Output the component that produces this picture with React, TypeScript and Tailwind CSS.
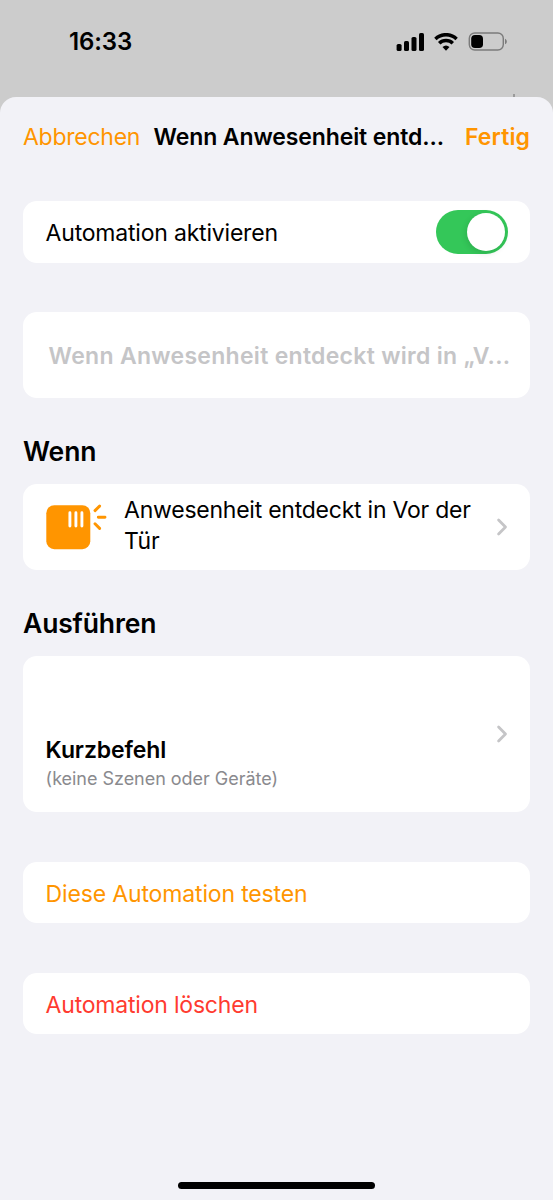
import { useState } from "react";
import type { ReactNode } from "react";

function StatusBar() {
  return (
    <header className="relative h-[97px] flex justify-between items-start pl-[69px] pr-[45px] pt-[27px]">
      <span className="text-[24px] leading-[30px] font-semibold tracking-[-0.1px]">16:33</span>
      <div className="flex items-center pt-[5px]">
        {/* Signal */}
        <svg width="28" height="18" viewBox="0 0 28 18" className="mr-[10px]">
          <rect x="0.6" y="11" width="5" height="7" rx="1.6" />
          <rect x="8" y="8" width="5" height="10" rx="1.6" />
          <rect x="15.5" y="4" width="5" height="14" rx="1.6" />
          <rect x="23" y="0" width="5" height="18" rx="1.6" />
        </svg>
        {/* Wifi */}
        <svg width="24" height="18" viewBox="0 0 24 18" fill="none" stroke="black" className="mr-[10px]">
          <path d="M1.4 5.9a15.4 15.4 0 0 1 21.2 0" strokeWidth="3.5" />
          <path d="M5.2 10.3a9.8 9.8 0 0 1 13.6 0" strokeWidth="3.5" />
          <path d="M8.5 14.1a5.2 5.2 0 0 1 7 0L12 17.7z" fill="black" stroke="none" />
        </svg>
        {/* Battery */}
        <svg width="40" height="19" viewBox="0 0 40 19">
          <rect x="1.3" y="1" width="34" height="17" rx="5.5" fill="none" stroke="#7b7b7b" strokeWidth="1.4" />
          <rect x="3.2" y="3" width="11.8" height="13" rx="3.8" />
          <path d="M37 6.7c2.4 1 2.4 4.6 0 5.6z" fill="#7b7b7b" />
        </svg>
      </div>
      <span className="absolute right-[38px] bottom-0 w-[2px] h-[3px] bg-[#9a9a9a]" />
    </header>
  );
}

function Chevron() {
  return (
    <svg width="12" height="18" viewBox="0 0 12 18" fill="none" stroke="#c5c5c7" strokeWidth="2.8" className="shrink-0">
      <path d="M2.6 2.1l6.9 6.9-6.9 6.9" strokeLinecap="round" strokeLinejoin="round" />
    </svg>
  );
}

function MotionSensorIcon() {
  return (
    <svg width="61" height="46" viewBox="0 0 61 46" className="shrink-0">
      <rect x="0.3" y="1.2" width="44" height="44" rx="8" fill="#ff9500" />
      <g fill="none" strokeWidth="2.9" strokeLinecap="round">
        <path d="M23.9 8.8v13.2M29.9 8.8v13.2M35.9 8.8v13.2" stroke="white" />
        <path d="M49 6.6l4.6-4.5M52.3 13.3h6.7M49 19.8l4.6 4.6" stroke="#ff9500" />
      </g>
    </svg>
  );
}

function Toggle() {
  const [on, setOn] = useState(true);
  return (
    <button
      role="switch"
      aria-checked={on}
      onClick={() => setOn(!on)}
      className={`w-[72px] h-[44px] rounded-full p-[3px] flex items-center ${
        on ? "bg-[#34c759] justify-end" : "bg-[#e9e9ea] justify-start"
      }`}
    >
      <span className="size-[38px] rounded-full bg-white shadow-[-1px_2px_6px_rgba(0,0,0,0.12)]" />
    </button>
  );
}

function Card({ className, children }: { className: string; children: ReactNode }) {
  return (
    <div
      className={`bg-white rounded-[14px] flex items-center pl-[22.6px] pr-[22px] text-[23px] tracking-[-0.2px] ${className}`}
    >
      {children}
    </div>
  );
}

export default function App() {
  return (
    <div className="relative w-full h-[1200px] bg-[#cccccc] text-black overflow-hidden font-['Inter',sans-serif]">
      <StatusBar />

      <div className="h-[1103px] bg-[#f2f2f7] rounded-t-[16px] px-[23px] flex flex-col">
        <nav className="h-[104px] pt-[25px] flex text-[23px] leading-[30px] whitespace-nowrap">
          <button className="text-[#ff9500] w-[130.5px] h-[30px] text-left tracking-[-0.25px]">Abbrechen</button>
          <h1 className="font-semibold flex-1 tracking-[-0.11px]">Wenn Anwesenheit entd...</h1>
          <button className="text-[#ff9500] font-semibold h-[30px] tracking-[0.1px]">Fertig</button>
        </nav>

        <Card className="h-[62px] justify-between">
          <span className="pt-[2px]">Automation aktivieren</span>
          <Toggle />
        </Card>

        <Card className="h-[86px] mt-[49px]">
          <span className="pl-[3px] pt-[2px] font-semibold text-[#c5c5c7] whitespace-nowrap tracking-[0.29px]">
            Wenn Anwesenheit entdeckt wird in „V...
          </span>
        </Card>

        <h2 className="mt-[35px] text-[26.5px] leading-[36px] font-semibold tracking-[-0.1px]">Wenn</h2>
        <Card className="h-[86px] mt-[15px]">
          <MotionSensorIcon />
          <p className="ml-[17.5px] pb-[2px] flex-1 leading-[31px] tracking-[-0.24px]">
            Anwesenheit entdeckt in Vor der Tür
          </p>
          <Chevron />
        </Card>

        <h2 className="mt-[35px] text-[26.5px] leading-[36px] font-semibold tracking-[-0.15px]">Ausführen</h2>
        <Card className="h-[156px] mt-[15px] justify-between">
          <div className="pt-[58px]">
            <p className="font-semibold leading-[32px] tracking-[-0.1px]">Kurzbefehl</p>
            <p className="text-[18px] leading-[26px] tracking-[-0.03px] text-[#8a8a8e]">(keine Szenen oder Geräte)</p>
          </div>
          <Chevron />
        </Card>

        <Card className="h-[61px] mt-[50px]">
          <button className="pt-[3px] text-[#ff9500] tracking-[-0.15px]">Diese Automation testen</button>
        </Card>
        <Card className="h-[61px] mt-[50px]">
          <button className="pt-[3px] text-[#ff3b30]">Automation löschen</button>
        </Card>
      </div>

      {/* Home indicator */}
      <div className="absolute bottom-[11.5px] left-[178px] w-[197px] h-[7px] rounded-full bg-black" />
    </div>
  );
}
